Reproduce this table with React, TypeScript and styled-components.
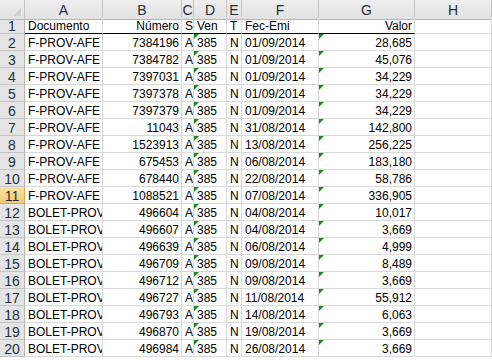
import React from "react";
import styled, { createGlobalStyle, css } from "styled-components";

const Global = createGlobalStyle`
  html, body { margin: 0; padding: 0; background: #ffffff; }
  body { width: 492px; height: 360px; overflow: hidden; }
`;

const Sheet = styled.div`
  display: grid;
  grid-template-columns: 25px 78px 79px 12px 33px 15px 77px 96px 1fr;
  grid-auto-rows: 17px;
  width: 492px;
  font-family: "Liberation Sans", Arial, sans-serif;
  font-size: 12px;
  color: #000;
  & > :nth-child(-n + 9) { height: 20px; }
`;

const HeaderBase = css`
  box-sizing: border-box;
  background: linear-gradient(#eeeeee, #e2e2e2);
  border-right: 1px solid #c4c4c4;
  border-bottom: 1px solid #b4b4b4;
  display: flex;
  align-items: center;
  justify-content: center;
  font-size: 14px;
  color: #27313f;
`;

const Corner = styled.div`
  ${HeaderBase};
  position: relative;
  grid-row: 1;
  &::after {
    content: "";
    position: absolute;
    right: 3px;
    bottom: 3px;
    width: 0;
    height: 0;
    border-left: 8px solid transparent;
    border-bottom: 8px solid #cfcfcf;
  }
`;

const ColHeader = styled.div`
  ${HeaderBase};
  padding-top: 1px;
`;

const RowHeader = styled.div<{ $active?: boolean }>`
  ${HeaderBase};
  background: ${(p) => (p.$active ? "linear-gradient(#fbe2a6, #f6c873)" : "#e4e4e4")};
  border-bottom: 1px solid ${(p) => (p.$active ? "#e2a748" : "#c4c4c4")};
  border-right: 1px solid ${(p) => (p.$active ? "#e2a748" : "#b4b4b4")};
  padding-top: 1px;
`;

const Cell = styled.div<{ $align?: "left" | "right"; $flag?: boolean; $underline?: boolean }>`
  box-sizing: border-box;
  position: relative;
  border-right: 1px solid #d9d9d9;
  border-bottom: 1px solid ${(p) => (p.$underline ? "#000" : "#d9d9d9")};
  padding: 0 2px 0 3px;
  line-height: 16px;
  padding-top: 1px;
  white-space: nowrap;
  overflow: hidden;
  text-align: ${(p) => p.$align ?? "left"};
  ${(p) =>
    p.$flag &&
    css`
      &::before {
        content: "";
        position: absolute;
        left: 0;
        top: 0;
        width: 0;
        height: 0;
        border-top: 5px solid #1c8a1c;
        border-right: 5px solid transparent;
      }
    `}
`;

type Row = [string, string, string, string, string, string, string];

const rows: Row[] = [
  ["F-PROV-AFE", "7384196", "A", "385", "N", "01/09/2014", "28,685"],
  ["F-PROV-AFE", "7384782", "A", "385", "N", "01/09/2014", "45,076"],
  ["F-PROV-AFE", "7397031", "A", "385", "N", "01/09/2014", "34,229"],
  ["F-PROV-AFE", "7397378", "A", "385", "N", "01/09/2014", "34,229"],
  ["F-PROV-AFE", "7397379", "A", "385", "N", "01/09/2014", "34,229"],
  ["F-PROV-AFE", "11043", "A", "385", "N", "31/08/2014", "142,800"],
  ["F-PROV-AFE", "1523913", "A", "385", "N", "13/08/2014", "256,225"],
  ["F-PROV-AFE", "675453", "A", "385", "N", "06/08/2014", "183,180"],
  ["F-PROV-AFE", "678440", "A", "385", "N", "22/08/2014", "58,786"],
  ["F-PROV-AFE", "1088521", "A", "385", "N", "07/08/2014", "336,905"],
  ["BOLET-PROV", "496604", "A", "385", "N", "04/08/2014", "10,017"],
  ["BOLET-PROV", "496607", "A", "385", "N", "04/08/2014", "3,669"],
  ["BOLET-PROV", "496639", "A", "385", "N", "06/08/2014", "4,999"],
  ["BOLET-PROV", "496709", "A", "385", "N", "09/08/2014", "8,489"],
  ["BOLET-PROV", "496712", "A", "385", "N", "09/08/2014", "3,669"],
  ["BOLET-PROV", "496727", "A", "385", "N", "11/08/2014", "55,912"],
  ["BOLET-PROV", "496793", "A", "385", "N", "14/08/2014", "6,063"],
  ["BOLET-PROV", "496870", "A", "385", "N", "19/08/2014", "3,669"],
  ["BOLET-PROV", "496984", "A", "385", "N", "26/08/2014", "3,669"],
];

const cols = ["A", "B", "C", "D", "E", "F", "G", "H"];

export default function App() {
  return (
    <>
      <Global />
      <Sheet>
        <Corner />
        {cols.map((c) => (
          <ColHeader key={c}>{c}</ColHeader>
        ))}

        <RowHeader>1</RowHeader>
        <Cell $underline>Documento</Cell>
        <Cell $underline $align="right">Número</Cell>
        <Cell $underline>S</Cell>
        <Cell $underline>Ven</Cell>
        <Cell $underline>T</Cell>
        <Cell $underline>Fec-Emi</Cell>
        <Cell $underline $align="right">Valor</Cell>
        <Cell />

        {rows.map((r, i) => (
          <React.Fragment key={i}>
            <RowHeader $active={i + 2 === 11}>{i + 2}</RowHeader>
            <Cell>{r[0]}</Cell>
            <Cell $align="right">{r[1]}</Cell>
            <Cell>{r[2]}</Cell>
            <Cell $flag>{r[3]}</Cell>
            <Cell>{r[4]}</Cell>
            <Cell>{r[5]}</Cell>
            <Cell $flag $align="right">{r[6]}</Cell>
            <Cell />
          </React.Fragment>
        ))}
      </Sheet>
    </>
  );
}
